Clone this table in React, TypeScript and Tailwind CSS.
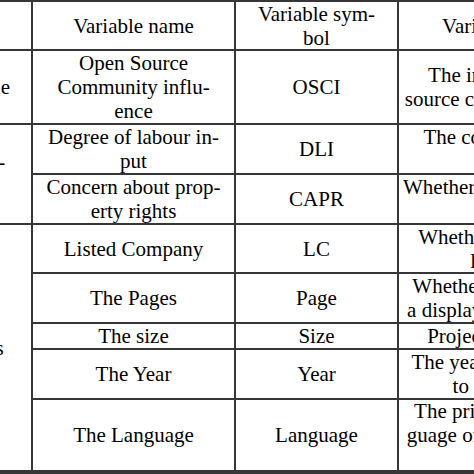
import React from "react";

type Cell = { lines: string[]; span?: string };

const Lines = ({ lines }: { lines: string[] }) => (
  <div className="text-center">
    {lines.map((l, i) => (
      <div key={i} className="whitespace-nowrap">
        {l}
      </div>
    ))}
  </div>
);

const cells: Cell[] = [
  // header
  { lines: ["Variable type"] },
  { lines: ["Variable name"] },
  { lines: ["Variable sym-", "bol"] },
  { lines: ["Variable definition"] },
  // OSCI
  { lines: ["Explained variable"] },
  { lines: ["Open Source", "Community influ-", "ence"] },
  { lines: ["OSCI"] },
  { lines: ["The influence of open", "source community on firms"] },
  // DLI
  { lines: ["Independent vari-", "ables"], span: "row-span-2" },
  { lines: ["Degree of labour in-", "put"] },
  { lines: ["DLI"] },
  { lines: ["The contribution of the", "labour"] },
  // CAPR
  { lines: ["Concern about prop-", "erty rights"] },
  { lines: ["CAPR"] },
  { lines: ["Whether the developer pays", "attention"] },
  // LC
  { lines: ["Control variables"], span: "row-span-5" },
  { lines: ["Listed Company"] },
  { lines: ["LC"] },
  { lines: ["Whether the company is", "listed or not"] },
  // Page
  { lines: ["The Pages"] },
  { lines: ["Page"] },
  { lines: ["Whether the project owns", "a display page or a website"] },
  // Size
  { lines: ["The size"] },
  { lines: ["Size"] },
  { lines: ["Project file size in KB"] },
  // Year
  { lines: ["The Year"] },
  { lines: ["Year"] },
  { lines: ["The year from its creation", "to the year 2020"] },
  // Language
  { lines: ["The Language"] },
  { lines: ["Language"] },
  { lines: ["The principal coding lan-", "guage of the project source", "code"] },
];

export default function App() {
  return (
    <div className="w-[474px] h-[474px] overflow-hidden bg-white font-['Liberation_Serif','Times_New_Roman',serif]">
      <div className="-ml-[169px] w-[811px] grid grid-cols-[200px_201px_161px_243px] grid-rows-[47px_72px_48px_48px_47px_48px_24px_48px_70px] gap-[2px] bg-[#363636] pt-[2px] pb-[4px] text-[21px] leading-[24px] text-black">
        {cells.map((c, i) => (
          <div
            key={i}
            className={`bg-white flex items-center justify-center overflow-hidden ${c.span ?? ""}`}
          >
            <Lines lines={c.lines} />
          </div>
        ))}
      </div>
    </div>
  );
}
